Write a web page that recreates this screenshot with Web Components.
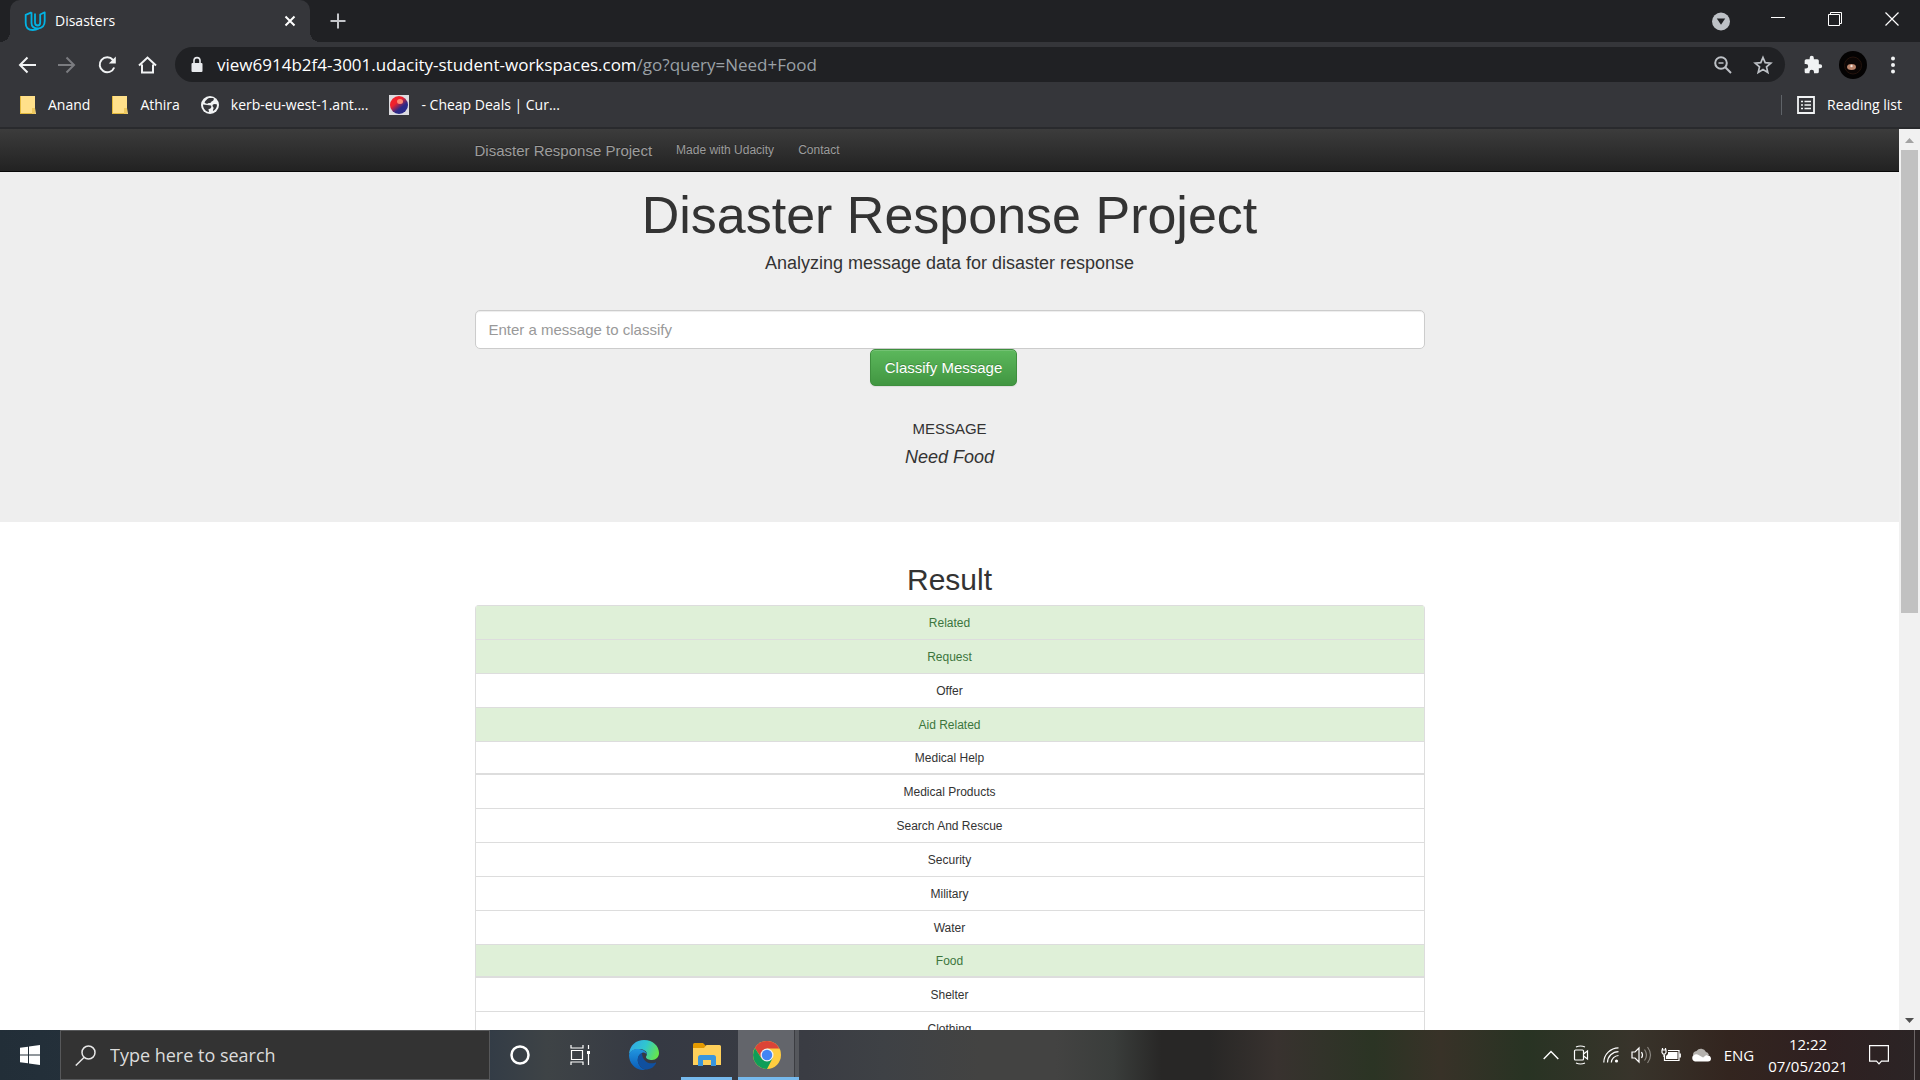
<!DOCTYPE html>
<html lang="en">
<head>
<meta charset="utf-8">
<title>Disasters</title>
<style>
html, body { margin: 0; height: 100%; overflow: hidden; }
body { --ui: "Open Sans", "Noto Sans", sans-serif; --page: "Liberation Sans", Arial, sans-serif; }
desk-top { height: 100%; }
</style>
</head>
<body>
<desk-top>
  <browser-tabs slot="browser"></browser-tabs>
  <browser-toolbar slot="browser"></browser-toolbar>
  <bookmarks-bar slot="browser"></bookmarks-bar>
  <page-view slot="view">
    <site-navbar></site-navbar>
    <message-hero message="Need Food"></message-hero>
    <result-list>
      <result-item active>Related</result-item>
      <result-item active>Request</result-item>
      <result-item>Offer</result-item>
      <result-item active>Aid Related</result-item>
      <result-item>Medical Help</result-item>
      <result-item>Medical Products</result-item>
      <result-item>Search And Rescue</result-item>
      <result-item>Security</result-item>
      <result-item>Military</result-item>
      <result-item>Water</result-item>
      <result-item active>Food</result-item>
      <result-item>Shelter</result-item>
      <result-item>Clothing</result-item>
    </result-list>
  </page-view>
  <task-bar slot="taskbar"></task-bar>
</desk-top>

<script>
const define = (name, html) => customElements.define(name, class extends HTMLElement {
  constructor() {
    super();
    const t = document.createElement('template');
    t.innerHTML = html;
    this.attachShadow({ mode: 'open' }).appendChild(t.content.cloneNode(true));
  }
  connectedCallback() {
    const out = this.shadowRoot.querySelector('output');
    if (out) out.textContent = this.getAttribute('message') || '';
  }
});

const reset = `
*, *::before, *::after { box-sizing: border-box; }
button { font: inherit; color: inherit; background: none; border: 0; padding: 0; margin: 0; display: flex; align-items: center; justify-content: center; }
a { color: inherit; text-decoration: none; }
svg { display: block; flex: none; }
`;

define('desk-top', `
<style>${reset}
:host { display: flex; flex-direction: column; }
.browser { flex: none; background: #35363a; border-bottom: 2px solid #292a2d; }
.view { flex: 1; min-height: 0; display: flex; background: #fff; }
</style>
<div class="browser"><slot name="browser"></slot></div>
<div class="view"><slot name="view"></slot></div>
<slot name="taskbar"></slot>
`);

define('browser-tabs', `
<style>${reset}
:host { display: flex; height: 42px; background: #202124; color: #e8eaed; font: 14px/20px var(--ui); padding-left: 10px; }
.tab { position: relative; display: flex; align-items: center; width: 300px; background: #35363a; border-radius: 10px 10px 0 0; padding: 0 12px 0 14px; gap: 9px; }
.tab::before, .tab::after { content: ""; position: absolute; bottom: 0; width: 10px; height: 10px; }
.tab::before { left: -10px; background: radial-gradient(circle at 0 0, transparent 10px, #35363a 10px); }
.tab::after { right: -10px; background: radial-gradient(circle at 100% 0, transparent 10px, #35363a 10px); }
.tab span { flex: 1; color: #fff; }
.new { width: 55px; }
.controls { display: flex; margin-left: auto; }
.controls button { width: 57px; height: 38px; }
</style>
<div class="tab">
  <svg width="22" height="22" viewBox="0 0 22 22" fill="none" stroke="#02b3e4" stroke-width="1.800" stroke-linejoin="round"><path d="M7.500 2.300L1.700 4.800V13c0 4.500 2.500 7 7 7 2.500 0 4.300-.6 5.800-1.700"/><path d="M7.500 2.300V13c0 3.200 2 5.300 6.500 5.600 4.500-.6 6.700-3 6.700-7.600V2.300l-4.500 2.200v8c0 2-.8 3-2.500 3s-2.700-1-2.700-3V3.500"/></svg>
  <span>Disasters</span>
  <button aria-label="Close tab"><svg width="16" height="16" viewBox="0 0 16 16" stroke="#fff" stroke-width="2"><path d="M3.500 3.500l9 9M12.500 3.500l-9 9"/></svg></button>
</div>
<button class="new" aria-label="New tab"><svg width="18" height="18" viewBox="0 0 18 18" stroke="#c4c6ca" stroke-width="2"><path d="M9 1.500v15M1.500 9h15"/></svg></button>
<div class="controls">
  <button aria-label="Search tabs"><svg width="20" height="26" viewBox="0 0 20 26"><circle cx="10" cy="15.500" r="9" fill="#bdc1c6"/><path d="M5.800 12.500h8.400L10 18.800z" fill="#202124"/></svg></button>
  <button aria-label="Minimise"><svg width="14" height="14" viewBox="0 0 14 14" stroke="#fff"><path d="M0 5.500h14"/></svg></button>
  <button aria-label="Restore"><svg width="14" height="14" viewBox="0 0 14 14" fill="none" stroke="#fff"><path d="M.5 2.500h11v11H.5zM2.500 2.500v-2h11v11h-2"/></svg></button>
  <button aria-label="Close"><svg width="14" height="14" viewBox="0 0 14 14" stroke="#fff" stroke-width="1.200"><path d="M.5.5l13 13M13.500.5l-13 13"/></svg></button>
</div>
`);

define('browser-toolbar', `
<style>${reset}
:host { display: flex; align-items: center; height: 45px; color: #f1f3f4; font: 17px/24px var(--ui); }
nav { display: flex; padding-left: 7px; }
nav button { width: 40px; height: 40px; }
.box { flex: 1; display: flex; align-items: center; height: 35px; margin: 0 8px; padding: 0 2px 0 15px; border-radius: 18px; background: #202124; }
.url { flex: 1; margin-left: 13px; color: #9aa0a6; white-space: nowrap; }
.url b { font-weight: 400; color: #fff; }
.box button, .tools button { width: 40px; height: 35px; }
.tools { display: flex; padding-right: 7px; }
</style>
<nav>
  <button aria-label="Back"><svg width="20" height="20" viewBox="0 0 20 20" fill="none" stroke="#f1f3f4" stroke-width="2"><path d="M19 10H3M10.500 2.500L3 10l7.500 7.500"/></svg></button>
  <button aria-label="Forward"><svg width="20" height="20" viewBox="0 0 20 20" fill="none" stroke="#7b7c80" stroke-width="2"><path d="M1 10h16M9.500 2.500L17 10l-7.500 7.500"/></svg></button>
  <button aria-label="Reload"><svg width="20" height="20" viewBox="0 0 20 20" fill="none" stroke="#f1f3f4" stroke-width="2"><path d="M17.200 12.500A7.500 7.500 0 1 1 16 5L17 6.500"/><path d="M18.800 1.500v7h-7z" fill="#f1f3f4" stroke="none"/></svg></button>
  <button aria-label="Home"><svg width="20" height="20" viewBox="0 0 20 20" fill="none" stroke="#f1f3f4" stroke-width="2"><path d="M5 9.500v8h11v-8M2 10.500L10.500 2.500l8.500 8"/></svg></button>
</nav>
<div class="box">
  <svg width="14" height="18" viewBox="0 0 14 18"><rect x="1.500" y="7" width="11" height="9" rx="1" fill="#e8eaed"/><path d="M4 7.500V4.600a3 3 0 0 1 6 0v2.900" fill="none" stroke="#e8eaed" stroke-width="1.600"/></svg>
  <div class="url"><b>view6914b2f4-3001.udacity-student-workspaces.com</b>/go?query=Need+Food</div>
  <button aria-label="Zoom"><svg width="20" height="20" viewBox="0 0 20 20" fill="none" stroke="#bdc1c6" stroke-width="2"><circle cx="8" cy="8" r="5.800"/><path d="M12.300 12.300L18 18"/><path d="M5.500 8h5" stroke-width="1.500"/></svg></button>
  <button aria-label="Bookmark this tab"><svg width="20" height="20" viewBox="0 0 20 20" fill="none" stroke="#bdc1c6" stroke-width="1.700"><path d="M10 2.500l2.200 5.200 5.600.5-4.300 3.700 1.300 5.500-4.800-2.900-4.800 2.900 1.300-5.500L2.200 8.200l5.600-.5z"/></svg></button>
</div>
<div class="tools">
  <button aria-label="Extensions"><svg width="20" height="20" viewBox="0 0 24 24" fill="#f1f3f4"><path d="M20.500 11H19V7a2 2 0 0 0-2-2h-4V3.500a2.500 2.500 0 0 0-5 0V5H4a2 2 0 0 0-2 2v3.800h1.500a2.700 2.700 0 0 1 0 5.400H2V20c0 1.100.9 2 2 2h3.800v-1.500a2.700 2.700 0 0 1 5.400 0V22H17a2 2 0 0 0 2-2v-4h1.500a2.500 2.500 0 0 0 0-5z"/></svg></button>
  <button aria-label="Profile"><svg width="28" height="28" viewBox="0 0 28 28"><circle cx="14" cy="14" r="14" fill="#040303"/><circle cx="14" cy="14.500" r="8.500" fill="#0b0605" stroke="#25140d"/><ellipse cx="12.500" cy="16" rx="4.500" ry="3" fill="#b9846b"/><circle cx="12.500" cy="15" r="1.200" fill="#f0e0d8"/></svg></button>
  <button aria-label="Menu"><svg width="6" height="18" viewBox="0 0 6 18" fill="#f1f3f4"><circle cx="3" cy="2.500" r="2"/><circle cx="3" cy="9" r="2"/><circle cx="3" cy="15.500" r="2"/></svg></button>
</div>
`);

define('bookmarks-bar', `
<style>${reset}
:host { display: flex; align-items: center; height: 36px; padding: 0 18px 4px 19px; gap: 21px; color: #fff; font: 14px/20px var(--ui); }
a { display: flex; align-items: center; gap: 12px; white-space: nowrap; }
.list { display: flex; margin-left: auto; gap: 12px; padding-left: 15px; border-left: 1px solid #5f6368; }
</style>
<a href="#"><svg width="17" height="18" viewBox="0 0 17 18"><path d="M1 0h15v12l1 6H1z" fill="#ffe08a"/><path d="M1 0h1v18H1zM1 17h15v1H1z" fill="#e2b93e"/><path d="M13 12h3v6h-3z" fill="#efc95f"/></svg>Anand</a>
<a href="#"><svg width="17" height="18" viewBox="0 0 17 18"><path d="M1 0h15v12l1 6H1z" fill="#ffe08a"/><path d="M1 0h1v18H1zM1 17h15v1H1z" fill="#e2b93e"/><path d="M13 12h3v6h-3z" fill="#efc95f"/></svg>Athira</a>
<a href="#"><svg width="18" height="18" viewBox="0 0 18 18"><circle cx="9" cy="9" r="9" fill="#f1f3f4"/><path d="M2 8.500l4 .5 4 .5c1 2-.5 3.500-2.500 3.500L8 16C4.500 15.500 2 12.500 2 8.500zM8 2h4.500c1 2-.5 3-2 3.500C10 7.500 8 7 7.500 7 7 8 5 8 3.500 6.500 4.500 4.500 6 3 8 2zM12 8.500c1.500-1 3-.5 4 0 0 3-1.500 5.500-4 6.500-.5-1.500 1-2 .5-3.500-.8-1-1.500-2-.5-3z" fill="#35363a"/></svg>kerb-eu-west-1.ant....</a>
<a href="#"><svg width="20" height="20" viewBox="0 0 20 20"><defs><linearGradient id="ball" x1="0" y1="0" x2=".8" y2="1"><stop offset=".4" stop-color="#f0222c"/><stop offset=".7" stop-color="#2a2a88"/></linearGradient></defs><path d="M0 0h20v20H0z" fill="#dcdce0"/><circle cx="10" cy="10" r="9" fill="url(#ball)"/><ellipse cx="11" cy="6.500" rx="3" ry="2.500" fill="#ff8a72"/></svg>- Cheap Deals | Cur...</a>
<button class="list"><svg width="18" height="18" viewBox="0 0 18 18" fill="none" stroke="#f1f3f4" stroke-width="1.800"><path d="M1 1h16v16H1z"/><path d="M4 5.500h2M7.500 5.500H14M4 9h2M7.500 9H14M4 12.500h2M7.500 12.500H14" stroke-width="1.500"/></svg>Reading list</button>
`);

define('page-view', `
<style>${reset}
:host { display: flex; flex: 1; min-width: 0; }
main { flex: 1; min-width: 0; overflow: hidden; font-family: var(--page); color: #333; }
.bar { flex: none; width: 21px; display: flex; flex-direction: column; align-items: center; background: #f1f1f1; }
.bar svg { height: 21px; }
.thumb { width: 17px; flex: 463; background: #c1c1c1; }
.rest { flex: 396; }
</style>
<main><slot></slot></main>
<div class="bar">
  <svg width="21" viewBox="0 0 21 21"><path d="M6 14h9l-4.500-5z" fill="#a3a3a3"/></svg>
  <div class="thumb"></div><div class="rest"></div>
  <svg width="21" viewBox="0 0 21 21"><path d="M6 9h9l-4.500 5z" fill="#505050"/></svg>
</div>
`);

define('site-navbar', `
<style>${reset}
:host { display: block; background: linear-gradient(#3c3c3c, #222); border-bottom: 1px solid #080808; color: #9d9d9d; text-shadow: 0 -1px 0 rgba(0,0,0,.25); }
nav { max-width: 950px; height: 42px; margin: 0 auto; display: flex; align-items: center; gap: 24px; font-size: 12px; }
.brand { font-size: 15px; }
</style>
<nav><a class="brand" href="#">Disaster Response Project</a><a href="#">Made with Udacity</a><a href="#">Contact</a></nav>
`);

define('message-hero', `
<style>${reset}
:host { display: block; background: #eee; padding: 8px 0 53px; text-align: center; }
form, h1, p { margin: 0 auto; max-width: 950px; }
h1 { font-weight: 400; font-size: 52px; line-height: 70px; }
p { padding-top: 1px; font-size: 18px; line-height: 24px; }
form { padding-top: 35px; }
input { display: block; width: 100%; height: 39px; padding: 0 13px; border: 1px solid #ccc; border-radius: 5px; background: #fff; font: 15px/20px var(--page); color: #555; box-shadow: inset 0 1px 1px rgba(0,0,0,.075); }
input::placeholder { color: #999; opacity: 1; }
form div { display: flex; justify-content: center; padding-right: 12px; }
button { height: 37px; padding: 0 14px; border: 1px solid #3e8f3e; border-radius: 5px; background: linear-gradient(#5cb85c, #419641); color: #fff; font-size: 15px; text-shadow: 0 -1px 0 rgba(0,0,0,.2); box-shadow: inset 0 1px 0 rgba(255,255,255,.15), 0 1px 1px rgba(0,0,0,.075); }
h4 { margin: 33px 0 6px; font-weight: 400; font-size: 15px; line-height: 20px; }
output { display: block; font-size: 18px; line-height: 24px; font-style: italic; }
</style>
<h1>Disaster Response Project</h1>
<p>Analyzing message data for disaster response</p>
<form>
  <input type="text" aria-label="Message" placeholder="Enter a message to classify">
  <div><button type="button">Classify Message</button></div>
</form>
<h4>MESSAGE</h4>
<output></output>
`);

define('result-list', `
<style>${reset}
:host { display: block; padding-top: 39px; }
section { max-width: 950px; margin: 0 auto; }
h2 { margin: 0 0 6px; font-weight: 400; font-size: 30px; line-height: 38px; text-align: center; }
.items { border: 1px solid #ddd; border-top: 0; border-radius: 4px 4px 0 0; overflow: hidden; }
::slotted(result-item:nth-child(6n-1)) { height: 33px; border-bottom: 1px solid #ddd; }
</style>
<section>
  <h2>Result</h2>
  <div class="items" role="list"><slot></slot></div>
</section>
`);

define('result-item', `
<style>
:host { display: flex; align-items: center; justify-content: center; box-sizing: border-box; height: 34px; border-top: 1px solid #ddd; font-size: 12px; line-height: 16px; color: #333; background: #fff; }
:host([active]) { color: #3c763d; background: #dff0d8; }
</style>
<slot></slot>
`);

define('task-bar', `
<style>${reset}
:host { display: flex; flex: none; height: 50px; color: #fff; font: 15px/22px var(--ui);
  background: linear-gradient(90deg, #222e38 0%, #2c3842 20%, #333c46 25.500%, #3e4346 28.500%, #353943 34%, #3a3c43 42%, #3e4145 46%, #434342 51%, #434342 55%, #3a3d3b 58%, #282726 60.500%, #282726 63%, #38322f 66.500%, #2b3424 71.500%, #383228 75%, #283323 79.500%, #38342b 85%, #33251f 90%, #2f2021 95%, #2b2425 100%); }
.start { width: 60px; }
.search { display: flex; align-items: center; width: 430px; padding-left: 14px; gap: 14px; background: #333; border: 1px solid #57585a; }
.search input { flex: 1; min-width: 0; border: 0; padding: 0; background: none; outline: 0; color: #dcdcdc; font: 18px/26px var(--ui); }
.search input::placeholder { color: #dcdcdc; opacity: 1; }
.apps { display: flex; }
.apps button { width: 60px; height: 50px; }
.apps .wide { width: 68px; margin-right: 3px; }
.apps .run { width: 51px; border-bottom: 3px solid #76b9ed; padding-top: 3px; }
.apps .on { width: 61px; margin-left: 6px; padding-right: 3px; background: linear-gradient(90deg, #63656b 56px, #3c3d42 56px, #3c3d42 57px, #55575c 57px); }
.tray { display: flex; align-items: center; margin-left: auto; }
.tray button { width: 30px; height: 50px; }
.tray .lang { width: 46px; }
.tray .clock { width: 92px; flex-direction: column; }
.tray .notes { width: 50px; }
.tray .peek { width: 6px; border-left: 1px solid #6b6566; margin-left: 10px; }
</style>
<button class="start" aria-label="Start"><svg width="20" height="20" viewBox="0 0 20 20" fill="#fff"><path d="M0 2.800l8-1.100v7.800H0zM9 1.500L20 0v9.500H9zM0 10.500h8v7.800l-8-1.100zM9 10.500h11V20L9 18.500z"/></svg></button>
<label class="search"><svg width="21" height="21" viewBox="0 0 21 21" fill="none" stroke="#e8e8e8" stroke-width="1.500"><circle cx="13.500" cy="7.500" r="6.500"/><path d="M9 12.500L.8 20.500"/></svg><input type="text" aria-label="Search" placeholder="Type here to search"></label>
<div class="apps">
  <button aria-label="Cortana"><svg width="20" height="20" viewBox="0 0 20 20"><circle cx="10" cy="10" r="8.500" fill="none" stroke="#fff" stroke-width="2.500"/></svg></button>
  <button aria-label="Task View"><svg width="21" height="20" viewBox="0 0 21 20" fill="none" stroke="#fff" stroke-width="1.200"><path d="M1.500 5.500h11v9h-11zM1 0v3h12V0M1 20v-3h12v3M18.500 0v4M18.500 9v11"/><path d="M17 6h3v3h-3z" fill="#fff" stroke="none"/></svg></button>
  <button class="wide" aria-label="Edge"><svg width="30" height="30" viewBox="0 0 30 30"><defs><linearGradient id="e1" x1="0" y1=".3" x2="1" y2=".6"><stop stop-color="#32a8e8"/><stop offset=".5" stop-color="#30c6cf"/><stop offset="1" stop-color="#66e64a"/></linearGradient><linearGradient id="e2" x1="0" y1="0" x2="0" y2="1"><stop stop-color="#2196e0"/><stop offset="1" stop-color="#0a5cb8"/></linearGradient></defs><path d="M0 14C1 5 7 0 15 0c9 0 15 6 15 13 0 4-3 7-7 7-3 0-6-1-6-3 0-1 1-1.500 1-3 0-3-4-5-8-5-5 0-8 2-10 5z" fill="url(#e1)"/><path d="M0 15C1 10 6 8.500 10 9c4 .5 8 3 8 6-1-2-3-3-5-2-3 1-5 5-4 9 1 4 4 7 8 8C7 31 0 24 0 15z" fill="url(#e2)"/><path d="M13 13c-3 1-5 5-4 9 1 4 5 8 9 7.500 4-.5 7-2.500 9-6 .5-1-.5-1-1-.8-6 2.300-13-1.700-13-9.700z" fill="#10509f"/></svg></button>
  <button class="run" aria-label="File Explorer"><svg width="28" height="24" viewBox="0 0 28 24"><path d="M0 1.500Q0 0 1.500 0H10l3 3v3H0z" fill="#e59a00"/><path d="M0 5h11l2.500-3H26.500Q28 2 28 3.500V22H0z" fill="#ffd05a"/><path d="M5 23v-8.500Q5 12 7.500 12h13q2.500 0 2.500 2.500V23h-5v-6h-8v6z" fill="#3a96dd"/></svg></button>
  <button class="run on" aria-label="Chrome"><svg width="28" height="28" viewBox="0 0 28 28"><circle cx="14" cy="14" r="14" fill="#ffcd40"/><path d="M14 7.500h12.400A14 14 0 0 0 1.900 7l6.500 10z" fill="#db4437"/><path d="M1.900 7A14 14 0 0 0 14 28l5.600-10.800L14 20l-5.600-2.800z" fill="#0f9d58"/><circle cx="14" cy="14" r="6.500" fill="#f1f1f1"/><circle cx="14" cy="14" r="5.200" fill="#4285f4"/></svg></button>
</div>
<div class="tray">
  <button aria-label="Show hidden icons"><svg width="16" height="10" viewBox="0 0 16 10" fill="none" stroke="#fff" stroke-width="1.400"><path d="M.7 9L8 1.500 15.300 9"/></svg></button>
  <button aria-label="Meet Now"><svg width="16" height="20" viewBox="0 0 16 20" fill="none" stroke="#fff" stroke-width="1.200"><rect x="1.500" y="5" width="9" height="10" rx="1"/><path d="M10.500 9l4-3v8l-4-3M3 2Q7.500 0 12 2M3 18q4.500 2 9 0"/></svg></button>
  <button aria-label="Wi-Fi"><svg width="16" height="16" viewBox="0 0 16 16" fill="none" stroke="#fff" stroke-width="1.200"><path d="M.8 15.500A15 15 0 0 1 15.500.8M4.500 15.500A11 11 0 0 1 15.500 4.600M8.300 15.500A7.500 7.500 0 0 1 15.500 8.500"/><circle cx="13.500" cy="14" r="1.600" fill="#fff" stroke="none"/></svg></button>
  <button aria-label="Volume"><svg width="21" height="18" viewBox="0 0 21 18" fill="none" stroke="#fff" stroke-width="1.200"><path d="M1 6h3l4-4v14l-4-4H1zM10.500 6q2 3 0 6"/><path d="M13.500 3.500q4 5.500 0 11M16.500 1q6 8 0 16" stroke="#8b8780"/></svg></button>
  <button aria-label="Battery"><svg width="20" height="16" viewBox="0 0 20 16" fill="none" stroke="#fff" stroke-width="1.200"><path d="M7 3.500h11v10H3.500V8M19.300 6.500v4"/><path d="M7 5h9.500v7H5V9l2-2z" fill="#fff" stroke="none"/><path d="M1 3h4v2.500L4 7H2L1 5.500zM1.500 1v2M4.500 1v2M3 7v3"/></svg></button>
  <button aria-label="OneDrive"><svg width="20" height="14" viewBox="0 0 20 14"><path d="M2 7a4 4 0 0 1 3.500-4A5.500 5.500 0 0 1 15 4q2 0 3 3l-8 4z" fill="#b4b1ad"/><path d="M4 13.500a3.600 3.600 0 0 1 0-7q2-.5 4 .8l4 2.200 3-2.300q4.500-.2 5 3.300 0 3-3 3z" fill="#fff"/></svg></button>
  <button class="lang">ENG</button>
  <button class="clock"><span>12:22</span><span>07/05/2021</span></button>
  <button class="notes" aria-label="Notifications"><svg width="20" height="20" viewBox="0 0 20 20" fill="none" stroke="#fff" stroke-width="1.200"><path d="M.6.6h18.800v15.500h-6.900L10 18.800l-2.500-2.700H.6z"/></svg></button>
  <button class="peek" aria-label="Show desktop"></button>
</div>
`);
</script>
</body>
</html>
